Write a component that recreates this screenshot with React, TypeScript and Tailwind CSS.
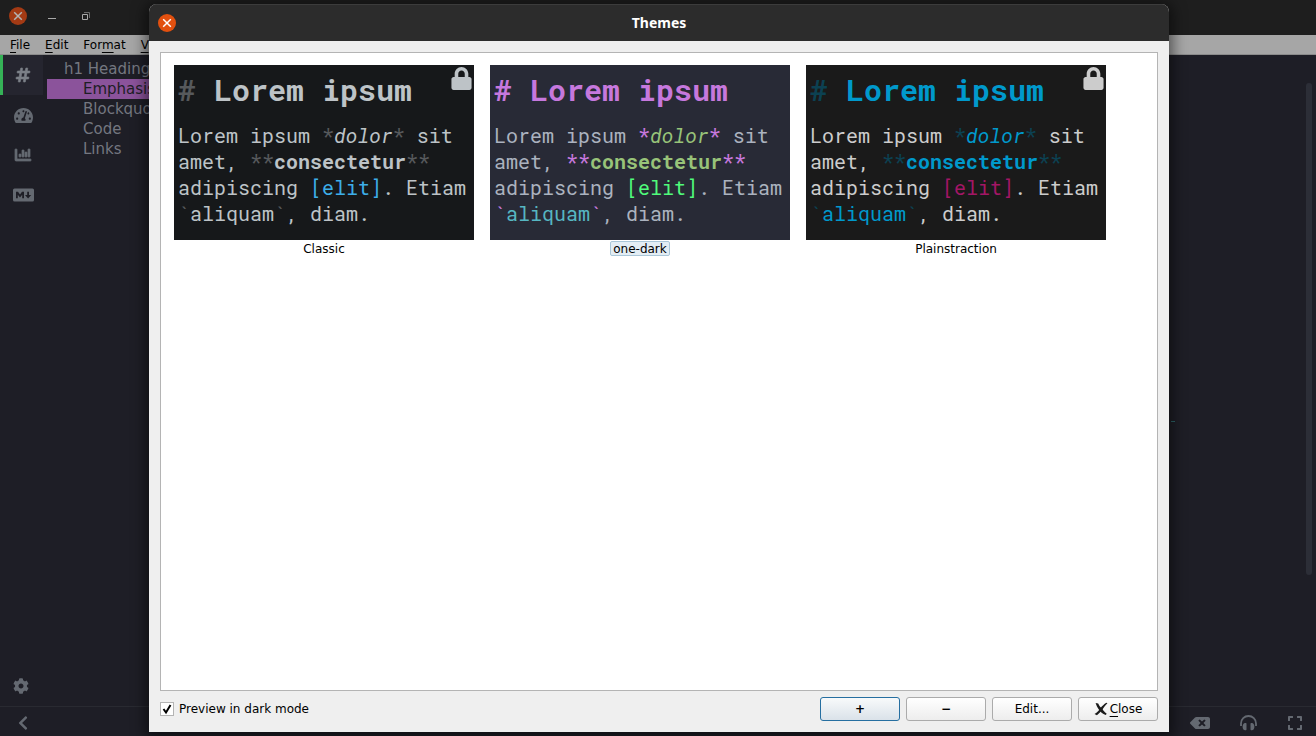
import type { ReactNode } from "react";
import {
  FaBackspace,
  FaChartBar,
  FaChevronLeft,
  FaCog,
  FaExpand,
  FaHashtag,
  FaLock,
  FaTachometerAlt,
} from "react-icons/fa";

type Theme = {
  name: string;
  locked: boolean;
  selected: boolean;
  surface: string;
  heading: string;
  headingMark: string;
  mark: string;
  emphasis: string;
  strong: string;
  link: string;
  tick: string;
  code: string;
  lock: string;
};

const themes: Theme[] = [
  {
    name: "Classic",
    locked: true,
    selected: false,
    surface: "bg-[#16181a] text-[#bdc3c7]",
    heading: "text-[#bdc3c7]",
    headingMark: "text-[#56595c]",
    mark: "text-[#56595c]",
    emphasis: "text-[#bdc3c7]",
    strong: "text-[#bdc3c7]",
    link: "text-[#3daee9]",
    tick: "text-[#56595c]",
    code: "text-[#bdc3c7]",
    lock: "text-[#bdc3c7]",
  },
  {
    name: "one-dark",
    locked: false,
    selected: true,
    surface: "bg-[#282a36] text-[#abb2bf]",
    heading: "text-[#c678dd]",
    headingMark: "text-[#c678dd]",
    mark: "text-[#c678dd]",
    emphasis: "text-[#98c379]",
    strong: "text-[#98c379]",
    link: "text-[#50fa7b]",
    tick: "text-[#c678dd]",
    code: "text-[#56b6c2]",
    lock: "text-[#abb2bf]",
  },
  {
    name: "Plainstraction",
    locked: true,
    selected: false,
    surface: "bg-[#1a1a1a] text-[#cccccc]",
    heading: "text-[#0099cc]",
    headingMark: "text-[#0c4152]",
    mark: "text-[#0c4152]",
    emphasis: "text-[#0099cc]",
    strong: "text-[#0099cc]",
    link: "text-[#a31666]",
    tick: "text-[#0c4152]",
    code: "text-[#0099cc]",
    lock: "text-[#cccccc]",
  },
];

const outline = ["Emphasis", "Blockquotes", "Code", "Links"];

function MarkdownIcon() {
  return (
    <svg viewBox="0 0 21 14" className="h-3.5 w-[21px]" aria-hidden="true">
      <rect y=".5" width="21" height="13" rx="1.500" fill="currentColor" />
      <path
        d="M3 10.200V3.800h2L7 6.600l2-2.800h2v6.400H9.200V6.800L7 9.600 4.800 6.800v3.400zM14.200 3.800H16v3.100h2.200L15.100 10.500 12 6.900h2.200z"
        fill="#1e1e26"
      />
    </svg>
  );
}

function HeadphonesIcon() {
  return (
    <svg viewBox="0 0 17 16" className="h-4 w-[17px]" aria-hidden="true">
      <path d="M1 11V8.500a7.500 7.500 0 0 1 15 0V11" fill="none" stroke="currentColor" strokeWidth="1.800" />
      <path
        d="M6.500 8.500v6a.7.7 0 0 1-.7.7h-.6C3.400 15.200 2.600 13.600 2.600 11.700S3.400 8 5.200 7.900h.6a.7.700 0 0 1 .7.600zM10.500 8.500v6a.7.7 0 0 0 .7.7h.6c1.800 0 2.600-1.600 2.600-3.500S13.600 8 11.800 7.900h-.6a.7.700 0 0 0-.7.600z"
        fill="currentColor"
      />
    </svg>
  );
}

function CrossCircle({ dim }: { dim?: boolean }) {
  return (
    <button
      type="button"
      aria-label="Close window"
      className={
        dim
          ? "grid size-[18px] place-items-center rounded-full bg-[#a33a14] text-[#b4b4b4]"
          : "grid size-[18px] place-items-center rounded-full bg-[#e2500f] text-white"
      }
    >
      <svg viewBox="0 0 10 10" className="size-2.5" aria-hidden="true">
        <path d="M1.200 1.200l7.600 7.600M8.800 1.200l-7.600 7.600" stroke="currentColor" strokeWidth="1.500" />
      </svg>
    </button>
  );
}

function ThemeCard({ theme }: { theme: Theme }) {
  return (
    <figure className="flex w-[300px] flex-col items-center">
      <div
        className={`relative h-[175px] w-full overflow-hidden pl-1 font-['Roboto_Mono','DejaVu_Sans_Mono',monospace] whitespace-pre ${theme.surface}`}
      >
        <h2 className={`pt-[5px] text-[30px] leading-10 font-bold ${theme.heading}`}>
          <span className={theme.headingMark}>#</span> Lorem ipsum
        </h2>
        <p className="pt-3 text-xl leading-[26px]">
          Lorem ipsum <span className={theme.mark}>*</span>
          <em className={theme.emphasis}>dolor</em>
          <span className={theme.mark}>*</span> sit{"\n"}amet,{" "}
          <span className={theme.mark}>**</span>
          <strong className={theme.strong}>consectetur</strong>
          <span className={theme.mark}>**</span>
          {"\n"}adipiscing <span className={theme.link}>[elit]</span>. Etiam{"\n"}
          <span className={theme.tick}>`</span>
          <span className={theme.code}>aliquam</span>
          <span className={theme.tick}>`</span>, diam.
        </p>
        {theme.locked && (
          <FaLock className={`absolute top-0.5 right-0.5 h-[23px] w-[21px] ${theme.lock}`} />
        )}
      </div>
      <figcaption
        className={
          theme.selected
            ? "mt-px rounded-xs border border-[#a9c6d8] bg-[#e3edf4] px-0.5 pt-px text-xs leading-3"
            : "mt-px border border-transparent px-0.5 pt-px text-xs leading-3"
        }
      >
        {theme.name}
      </figcaption>
    </figure>
  );
}

function DialogButton({ primary, children }: { primary?: boolean; children: ReactNode }) {
  return (
    <button
      type="button"
      className={
        primary
          ? "flex h-6 w-20 items-center justify-center rounded-[3px] border border-[#266fa1] bg-linear-to-b from-[#f8fafb] to-[#dae2e9]"
          : "flex h-6 w-20 items-center justify-center rounded-[3px] border border-[#ababab] bg-linear-to-b from-white to-[#ededed]"
      }
    >
      {children}
    </button>
  );
}

function ThemesDialog() {
  return (
    <section
      role="dialog"
      aria-labelledby="dialog-title"
      className="absolute top-1 right-[147px] bottom-1 left-[149px] flex flex-col overflow-hidden rounded-t-lg bg-[#efefef] text-xs text-black shadow-[0_2px_14px_4px_rgba(0,0,0,0.5)]"
    >
      <header className="grid h-[37px] grid-cols-[1fr_auto_1fr] items-center border-t border-[#3c3c3c] bg-[#2c2c2c] px-[9px]">
        <CrossCircle />
        <h1 id="dialog-title" className="font-['Noto_Sans',sans-serif] text-sm font-bold text-white">
          Themes
        </h1>
      </header>
      <div className="flex flex-1 flex-col p-[11px]">
        <div className="flex flex-1 flex-wrap content-start gap-4 border border-[#b4b4b4] bg-white px-[13px] pt-3">
          {themes.map((theme) => (
            <ThemeCard key={theme.name} theme={theme} />
          ))}
        </div>
        <footer className="flex items-center justify-between pt-1.5">
          <label className="flex items-center gap-[5px] pb-px">
            <span className="grid size-3.5 place-items-center">
              <input
                type="checkbox"
                defaultChecked
                className="peer col-start-1 row-start-1 size-3.5 appearance-none border border-[#b4b4b4] bg-white"
              />
              <svg
                viewBox="0 0 14 14"
                className="pointer-events-none invisible col-start-1 row-start-1 size-3.5 peer-checked:visible"
                aria-hidden="true"
              >
                <path d="M3.500 7l2.500 3.500L10.500 3" fill="none" stroke="#000" strokeWidth="2" />
              </svg>
            </span>
            Preview in dark mode
          </label>
          <div className="flex gap-1.5">
            <DialogButton primary>
              <span className="font-bold">+</span>
            </DialogButton>
            <DialogButton>
              <span className="font-bold">−</span>
            </DialogButton>
            <DialogButton>Edit...</DialogButton>
            <DialogButton>
              <svg viewBox="0 0 13 13" className="mr-0.5 size-3.5" aria-hidden="true">
                <path
                  d="M1.500 1l2.400.3c.8 1.800 1.600 2.900 2.900 4 1.200 1.500 2.700 3.800 5 5.500l-.9 1.200c-3-.8-5-3-6.400-5.100C3.200 5.300 2.200 3.300 1.500 1z"
                  fill="#1c1c1c"
                />
                <path
                  d="M11.500.6l1 .6C10.200 3.600 8.800 5.500 7.500 7.500 6.100 9.300 4.500 10.900 2.700 12.300L.5 11.200C3.100 9.600 4.700 7.600 6 5.700 7.500 3.600 9.400 1.800 11.500.6z"
                  fill="#1c1c1c"
                />
              </svg>
              <span>
                <u className="underline-offset-3">C</u>lose
              </span>
            </DialogButton>
          </div>
        </footer>
      </div>
    </section>
  );
}

export default function App() {
  return (
    <div className="relative flex h-screen flex-col overflow-hidden bg-[#1e1e26] font-['DejaVu_Sans',sans-serif] text-xs">
      <header className="flex h-[35px] shrink-0 items-center bg-[#1e1e1e] pb-[3px] pl-[9px] text-[#a8a8a8]">
        <CrossCircle dim />
        <button type="button" aria-label="Minimize" className="ml-[21px] h-2.5 w-2">
          <svg viewBox="0 0 8 10" className="h-2.5 w-2" aria-hidden="true">
            <path d="M0 7.500h8" stroke="currentColor" />
          </svg>
        </button>
        <button type="button" aria-label="Restore" className="ml-[26px] size-2">
          <svg viewBox="0 0 8 8" className="size-2" fill="none" aria-hidden="true">
            <path d="M.5 2.500h5v5h-5z" stroke="currentColor" />
            <path d="M2 .5h5.500V6" stroke="#6c6c6c" />
          </svg>
        </button>
      </header>
      <nav className="flex h-5 shrink-0 items-center gap-[15px] border-b border-[#8b8b8b] bg-[#a6a6a6] pl-2.5 text-black">
        <button type="button"><u className="underline-offset-3">F</u>ile</button>
        <button type="button"><u className="underline-offset-3">E</u>dit</button>
        <button type="button">For<u className="underline-offset-3">m</u>at</button>
        <button type="button"><u className="underline-offset-3">V</u>iew</button>
      </nav>
      <div className="flex min-h-0 flex-1">
        <aside className="flex w-[43px] flex-col text-[#646971]">
          <button type="button" aria-label="Outline" className="flex h-10 items-center justify-center border-l-3 border-[#35b257] bg-[#25252f] text-[#7c8088]">
            <FaHashtag className="size-4 overflow-visible" stroke="currentColor" strokeWidth="20" />
          </button>
          <button type="button" aria-label="Session statistics" className="flex h-10 items-center justify-center pl-[3px]">
            <FaTachometerAlt className="size-[19px]" />
          </button>
          <button type="button" aria-label="Document statistics" className="flex h-10 items-center justify-center pl-[3px]">
            <FaChartBar className="size-4 overflow-visible" stroke="currentColor" strokeWidth="24" />
          </button>
          <button type="button" aria-label="Cheat sheet" className="flex h-10 items-center justify-center pl-[3px]">
            <MarkdownIcon />
          </button>
          <button type="button" aria-label="Settings" className="mt-auto mb-3 flex justify-center pr-px">
            <FaCog className="size-4" />
          </button>
        </aside>
        <ul className="ml-1 w-60 pt-1 text-[15px] leading-5 text-[#747780]">
          <li className="pl-[17px]">h1 Heading</li>
          {outline.map((item, index) => (
            <li key={item} className={index === 0 ? "bg-[#8b539b] pl-9 text-[#1e1e26]" : "pl-9"}>
              {item}
            </li>
          ))}
        </ul>
        <main className="flex flex-1 justify-end">
          <div className="mt-[366px] mr-[131px] h-px w-1 bg-[#2d6468]" />
          <div className="mt-7 mr-1 mb-[131px] w-1.5 rounded-full bg-[#2c2e37]" />
        </main>
      </div>
      <footer className="flex h-[30px] shrink-0 items-center justify-between border-t border-[#292a31] pt-0.5 pr-[13px] pl-[15px] text-[#646971]">
        <button type="button" aria-label="Hide sidebar">
          <FaChevronLeft className="size-4" />
        </button>
        <div className="flex items-center gap-[30px]">
          <button type="button" aria-label="Hemingway mode"><FaBackspace className="size-5" /></button>
          <button type="button" aria-label="Distraction free"><HeadphonesIcon /></button>
          <button type="button" aria-label="Full screen"><FaExpand className="size-4" /></button>
        </div>
      </footer>
      <ThemesDialog />
    </div>
  );
}
